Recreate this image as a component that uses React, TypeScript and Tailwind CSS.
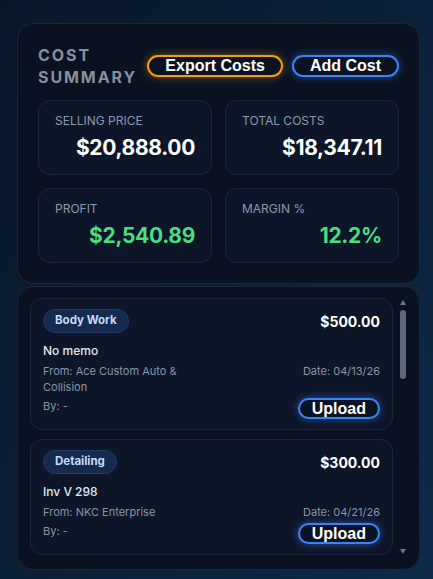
import React from "react";

type Cost = {
  category: string;
  amount: string;
  memo: string;
  from: string;
  date: string;
  by: string;
};

const costs: Cost[] = [
  { category: "Body Work", amount: "$500.00", memo: "No memo", from: "Ace Custom Auto & Collision", date: "04/13/26", by: "-" },
  { category: "Detailing", amount: "$300.00", memo: "Inv V 298", from: "NKC Enterprise", date: "04/21/26", by: "-" },
];

const sans = "font-['Inter','Noto_Sans',sans-serif]";
const arial = "font-['Liberation_Sans','Arial',sans-serif]";

function Stat({ label, value, green }: { label: string; value: string; green?: boolean }) {
  return (
    <div className="rounded-xl border border-[#1d2739] bg-[#0d1528] px-4 pt-3 pb-3">
      <div className="text-xs leading-4 text-[#8b9ab0]">{label}</div>
      <div
        className={`mt-[5px] text-right text-[21px] font-bold leading-7 tracking-[-0.015em] ${green ? "text-[#4ade80]" : "text-white"}`}
      >
        {value}
      </div>
    </div>
  );
}

function CostItem({ c }: { c: Cost }) {
  return (
    <div className="shrink-0 rounded-xl border border-[#1d2739] bg-[#0d1528] px-3 pt-2.5 pb-2.5">
      <div className="flex items-center justify-between">
        <span className="flex h-6 items-center rounded-full border border-[#1f3a63] bg-[#142b4d] px-[11px] text-[11.5px] font-bold text-[#c3dafc]">
          {c.category}
        </span>
        <span className="text-[14px] font-bold text-white">{c.amount}</span>
      </div>
      <div className="mt-2 text-[12px] font-medium leading-5 text-[#e2e8f0]">{c.memo}</div>
      <div className="mt-0.5 grid grid-cols-2 gap-x-2 gap-y-[3px] text-[11px] leading-4 text-[#8a96a8]">
        <div>From: {c.from}</div>
        <div className="text-right">Date: {c.date}</div>
        <div>By: {c.by}</div>
        <div className="flex justify-end">
          <button
            className={`${arial} rounded-full border-2 border-[#3b82f6] bg-[#0b1322] px-3 text-base font-bold leading-[17px] text-white shadow-[0_0_8px_rgba(59,130,246,0.55)]`}
          >
            Upload
          </button>
        </div>
      </div>
    </div>
  );
}

function ScrollBar() {
  return (
    <div className="flex w-[14px] shrink-0 flex-col items-center pt-[2px] pb-[2px]">
      <svg width="6" height="5" viewBox="0 0 6 5">
        <polygon points="3,0 6,5 0,5" fill="#6b7586" />
      </svg>
      <div className="mt-[5px] h-[69px] w-[6px] rounded-full bg-[#5d6879]" />
      <div className="flex-1" />
      <svg width="6" height="5" viewBox="0 0 6 5">
        <polygon points="0,0 6,0 3,5" fill="#6b7586" />
      </svg>
    </div>
  );
}

export default function App() {
  return (
    <div
      className={`${sans} min-h-[579px] w-full bg-[linear-gradient(120deg,#0a1729_0%,#0a1f36_50%,#0c2a48_100%)] pt-[23px]`}
    >
      <div className="ml-[17px] w-[403px]">
        <div className="rounded-2xl border border-[#1b2536] bg-[#0a1221] px-5 pt-5 pb-5">
          <div className="flex items-center justify-between">
            <div className="text-base font-bold leading-[22px] tracking-[0.12em] text-[#87909d]">
              COST
              <br />
              SUMMARY
            </div>
            <div className="flex items-center gap-[9px]">
              <button
                className={`${arial} rounded-full border-2 border-[#f59e0b] bg-[#0b1322] px-4 text-base font-bold leading-[18px] text-white shadow-[0_0_8px_rgba(245,158,11,0.45)]`}
              >
                Export Costs
              </button>
              <button
                className={`${arial} rounded-full border-2 border-[#3b82f6] bg-[#0b1322] px-4 text-base font-bold leading-[18px] text-white shadow-[0_0_8px_rgba(59,130,246,0.5)]`}
              >
                Add Cost
              </button>
            </div>
          </div>
          <div className="mt-3 grid grid-cols-2 gap-[13px]">
            <Stat label="SELLING PRICE" value="$20,888.00" />
            <Stat label="TOTAL COSTS" value="$18,347.11" />
            <Stat label="PROFIT" value="$2,540.89" green />
            <Stat label="MARGIN %" value="12.2%" green />
          </div>
        </div>

        <div className="mt-0.5 rounded-2xl border border-[#1b2536] bg-[#0a1221] pl-3 pr-[9px] pt-[11px] pb-[13px]">
          <div className="flex h-[258px] gap-[3px]">
            <div className="flex min-w-0 flex-1 flex-col gap-[9px] overflow-hidden">
              {costs.map((c, i) => (
                <CostItem key={i} c={c} />
              ))}
            </div>
            <ScrollBar />
          </div>
        </div>
      </div>
    </div>
  );
}
